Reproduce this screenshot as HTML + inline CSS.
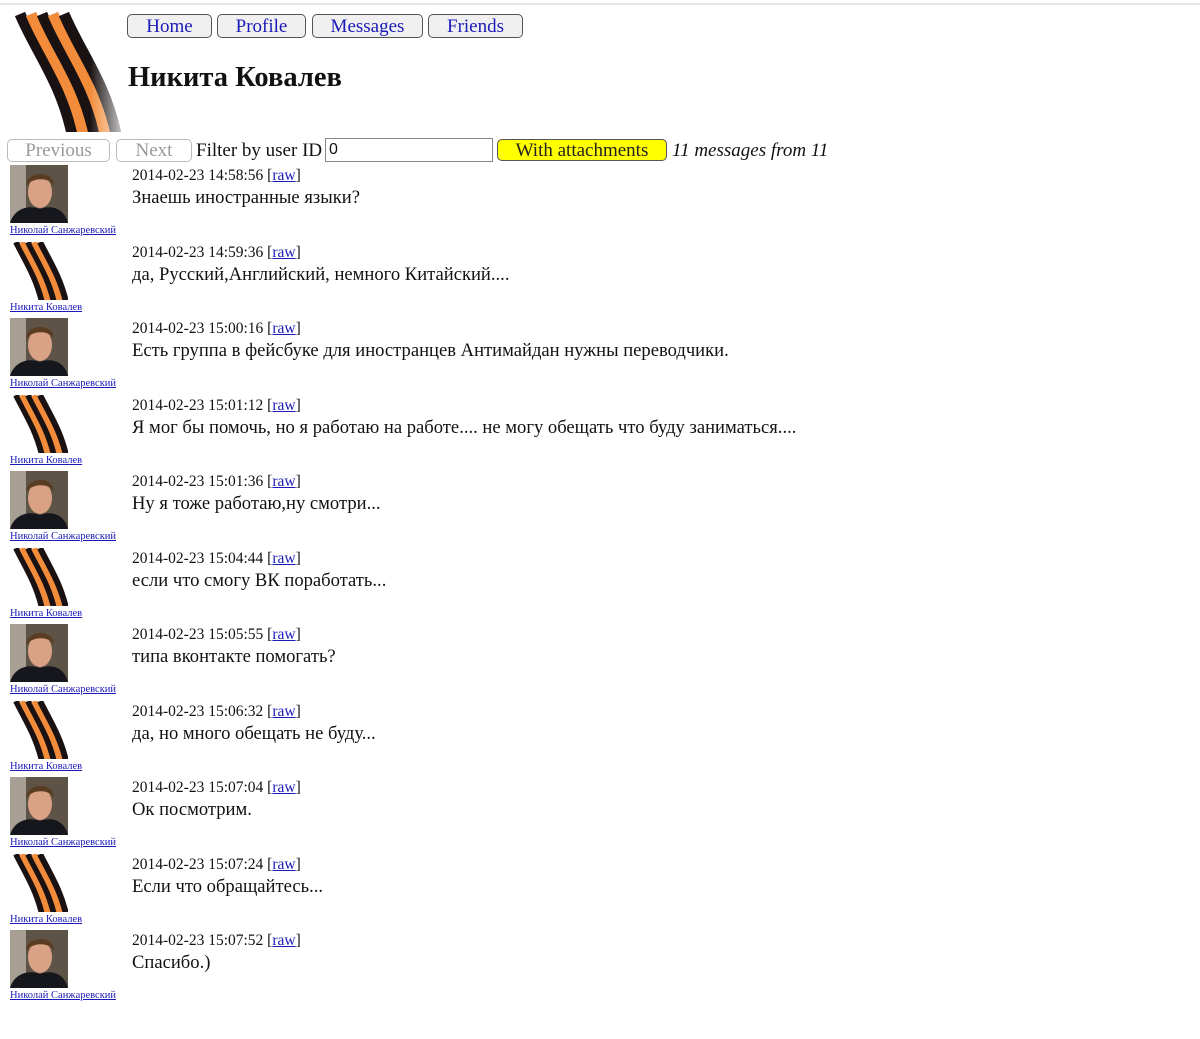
<!DOCTYPE html>
<html><head><meta charset="utf-8"><style>
body{margin:0;background:#fff;font-family:"Liberation Serif",serif;color:#111;width:1200px;height:1039px;overflow:hidden;position:relative}
.topline{position:absolute;left:0;top:3px;width:1200px;height:2px;background:#e4e4e4}
.nav{position:absolute;top:14px;height:22px;border:1px solid #555;border-radius:5px;background:#f0f0f0;color:#1a1ab8;font-size:19px;text-align:center;line-height:23px}
h1{position:absolute;left:128px;top:62px;margin:0;font-size:28.5px;font-weight:bold}
.btn{position:absolute;top:139px;height:21px;border:1px solid #bbb;border-radius:5px;color:#999;font-size:19px;text-align:center;line-height:22px}
.lbl{position:absolute;top:140px;left:196px;font-size:19px;line-height:22px}
.inp{position:absolute;left:325px;top:138px;border:1px solid #888;font-family:"Liberation Sans",sans-serif;font-size:16px;line-height:22px;padding-left:3px;box-sizing:border-box;width:168px;height:24px}
.att{position:absolute;left:497px;top:139px;width:168px;height:20px;background:#ff0;border:1px solid #555;border-radius:5px;font-size:19px;text-align:center;line-height:21px;color:#222}
.cnt{position:absolute;left:672px;top:140px;font-size:19px;font-style:italic;line-height:22px}
.row{position:absolute;left:0;width:900px;height:76px}
.av{position:absolute;left:10px;top:0;width:58px;height:58px}
.nm{position:absolute;left:10px;top:60px;font-size:10.5px;color:#1a1ab8;text-decoration:underline;white-space:nowrap}
.dt{position:absolute;left:132px;top:2px;font-size:15.5px}
.dt a{color:#1a1ab8;text-decoration:underline}
.ms{position:absolute;left:132px;top:22px;font-size:18.6px;white-space:nowrap}
</style></head><body>
<div class="topline"></div>
<svg style="position:absolute;left:6px;top:12px" width="120" height="120" viewBox="0 0 120 120">
<defs><linearGradient id="f" x1="0" y1="0" x2="1" y2="0"><stop offset="0.7" stop-color="#fff" stop-opacity="0"/><stop offset="1" stop-color="#fff" stop-opacity="0.85"/></linearGradient></defs>
<g fill="none" stroke-width="11">
<path d="M14 2 C30 40,55 70,66 122" stroke="#1a1212"/>
<path d="M25 2 C41 40,66 70,77 122" stroke="#f28c3a"/>
<path d="M36 2 C52 40,77 70,88 122" stroke="#1a1212"/>
<path d="M47 2 C63 40,88 70,99 122" stroke="#f28c3a"/>
<path d="M58 2 C74 40,99 70,110 122" stroke="#1a1212"/>
</g>
<rect x="0" y="0" width="120" height="120" fill="url(#f)"/>
</svg>
<div class="nav" style="left:127px;width:83px">Home</div>
<div class="nav" style="left:217px;width:87px">Profile</div>
<div class="nav" style="left:312px;width:109px">Messages</div>
<div class="nav" style="left:428px;width:93px">Friends</div>
<h1>Никита Ковалев</h1>
<div class="btn" style="left:7px;width:101px">Previous</div>
<div class="btn" style="left:116px;width:74px">Next</div>
<div class="lbl">Filter by user ID</div>
<div class="inp">0</div>
<div class="att">With attachments</div>
<div class="cnt">11 messages from 11</div>

<svg width="0" height="0" style="position:absolute">
<defs>
<symbol id="ph" viewBox="0 0 58 58"><rect width="58" height="58" fill="#5e5347"/><rect x="0" y="0" width="16" height="58" fill="#a89f94"/><ellipse cx="30" cy="27" rx="12" ry="16" fill="#d9a285"/><path d="M16 21 C16 6,44 4,44 21 C40 12,22 12,16 21Z" fill="#5a3c22"/><path d="M0 58 C5 42,20 40,30 44 C40 40,54 42,58 58Z" fill="#15171d"/></symbol>
<symbol id="rb" viewBox="0 0 58 58"><g fill="none" stroke-width="6"><path d="M6 0 C16 20,26 35,32 60" stroke="#1a1212"/><path d="M12 0 C22 20,32 35,38 60" stroke="#f28c3a"/><path d="M18 0 C28 20,38 35,44 60" stroke="#1a1212"/><path d="M24 0 C34 20,44 35,50 60" stroke="#f28c3a"/><path d="M30 0 C40 20,50 35,56 60" stroke="#1a1212"/></g></symbol>
</defs></svg>

<div class="row" style="top:165px"><svg class="av"><use href="#ph"/></svg><div class="nm">Николай Санжаревский</div><div class="dt">2014-02-23 14:58:56 [<a>raw</a>]</div><div class="ms">Знаешь иностранные языки?</div></div>
<div class="row" style="top:242px"><svg class="av"><use href="#rb"/></svg><div class="nm">Никита Ковалев</div><div class="dt">2014-02-23 14:59:36 [<a>raw</a>]</div><div class="ms">да, Русский,Английский, немного Китайский....</div></div>
<div class="row" style="top:318px"><svg class="av"><use href="#ph"/></svg><div class="nm">Николай Санжаревский</div><div class="dt">2014-02-23 15:00:16 [<a>raw</a>]</div><div class="ms">Есть группа в фейсбуке для иностранцев Антимайдан нужны переводчики.</div></div>
<div class="row" style="top:395px"><svg class="av"><use href="#rb"/></svg><div class="nm">Никита Ковалев</div><div class="dt">2014-02-23 15:01:12 [<a>raw</a>]</div><div class="ms">Я мог бы помочь, но я работаю на работе.... не могу обещать что буду заниматься....</div></div>
<div class="row" style="top:471px"><svg class="av"><use href="#ph"/></svg><div class="nm">Николай Санжаревский</div><div class="dt">2014-02-23 15:01:36 [<a>raw</a>]</div><div class="ms">Ну я тоже работаю,ну смотри...</div></div>
<div class="row" style="top:548px"><svg class="av"><use href="#rb"/></svg><div class="nm">Никита Ковалев</div><div class="dt">2014-02-23 15:04:44 [<a>raw</a>]</div><div class="ms">если что смогу ВК поработать...</div></div>
<div class="row" style="top:624px"><svg class="av"><use href="#ph"/></svg><div class="nm">Николай Санжаревский</div><div class="dt">2014-02-23 15:05:55 [<a>raw</a>]</div><div class="ms">типа вконтакте помогать?</div></div>
<div class="row" style="top:701px"><svg class="av"><use href="#rb"/></svg><div class="nm">Никита Ковалев</div><div class="dt">2014-02-23 15:06:32 [<a>raw</a>]</div><div class="ms">да, но много обещать не буду...</div></div>
<div class="row" style="top:777px"><svg class="av"><use href="#ph"/></svg><div class="nm">Николай Санжаревский</div><div class="dt">2014-02-23 15:07:04 [<a>raw</a>]</div><div class="ms">Ок посмотрим.</div></div>
<div class="row" style="top:854px"><svg class="av"><use href="#rb"/></svg><div class="nm">Никита Ковалев</div><div class="dt">2014-02-23 15:07:24 [<a>raw</a>]</div><div class="ms">Если что обращайтесь...</div></div>
<div class="row" style="top:930px"><svg class="av"><use href="#ph"/></svg><div class="nm">Николай Санжаревский</div><div class="dt">2014-02-23 15:07:52 [<a>raw</a>]</div><div class="ms">Спасибо.)</div></div>
</body></html>
